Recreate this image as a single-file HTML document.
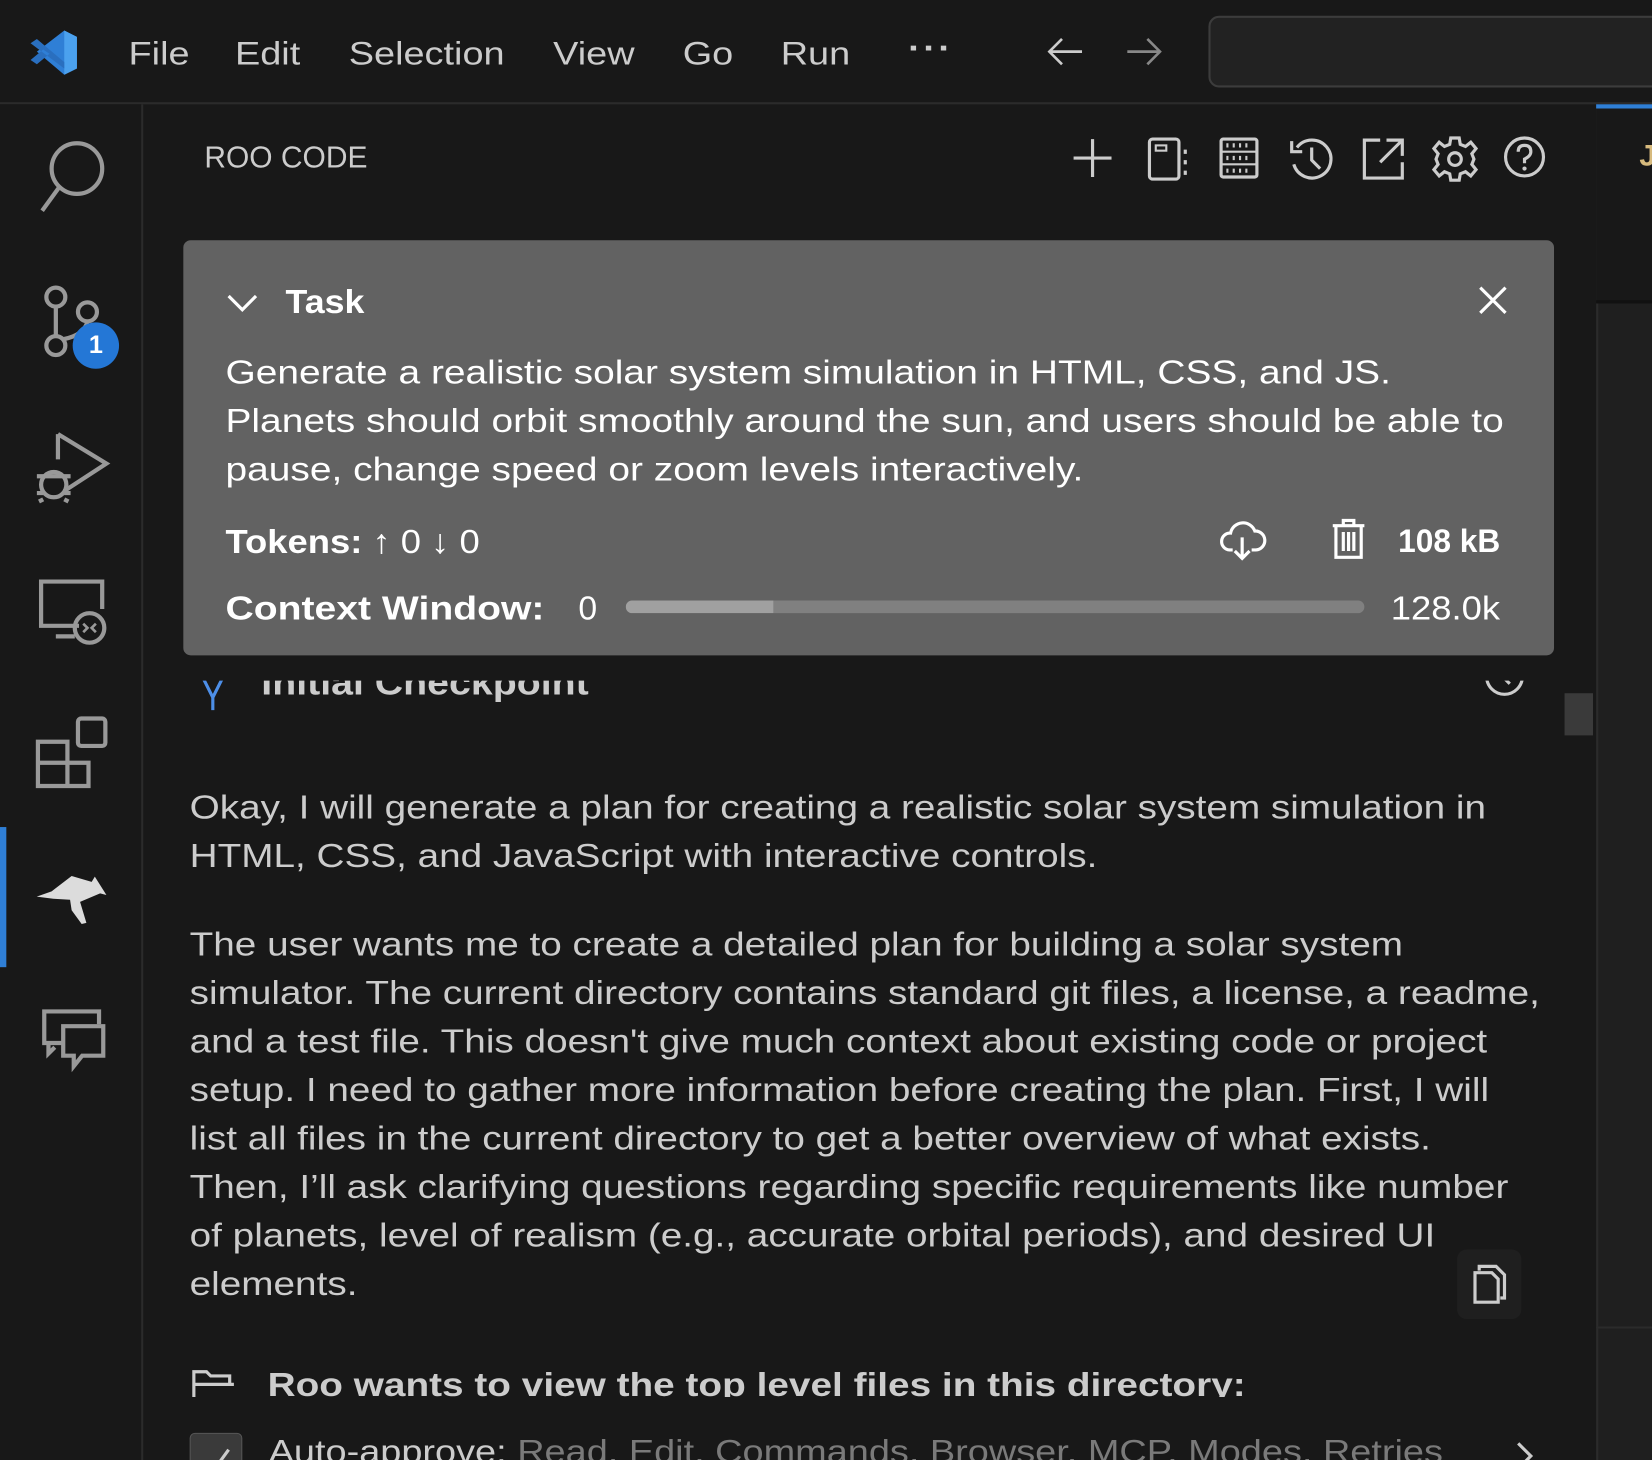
<!DOCTYPE html>
<html><head><meta charset="utf-8"><style>
html,body{margin:0;padding:0;background:#181818;overflow:hidden;width:1652px;height:1460px}
#s{position:absolute;left:0;top:0;width:1568px;height:1386px;transform:scale(1.05357);transform-origin:0 0;font-family:"Segoe UI","Liberation Sans",sans-serif;color:#ccc;background:#181818;overflow:hidden}
.a{position:absolute;white-space:nowrap;transform-origin:0 50%}
svg{position:absolute;overflow:visible}
.menu{font-size:31px;color:#ccc;top:33px;transform:scaleX(1.16)}
.b{font-weight:bold}
.p{font-size:32px;line-height:46px;color:#ccc;left:180px;transform:scaleX(1.148);transform-origin:0 0}
</style></head><body><div id="s">
<!-- title bar -->
<div class="a" style="left:0;top:0;width:1568px;height:97px;background:#181818;border-bottom:2px solid #2b2b2b"></div>
<svg style="left:27px;top:27px" width="48" height="46" viewBox="0 0 48 46"><path d="M34 2 L46 8 V38 L34 44 L8 22 L34 2Z" fill="#2f7fd6"/><path d="M34 2 V44 L46 38 V8Z" fill="#4ba1ee"/><path d="M2 14 L8 10 L34 32 V38 Z M2 30 L8 34 L20 24 L14 20Z" fill="#2a6fbf"/></svg>
<div class="a menu" style="left:122px">File</div>
<div class="a menu" style="left:223px">Edit</div>
<div class="a menu" style="left:331px">Selection</div>
<div class="a menu" style="left:525px">View</div>
<div class="a menu" style="left:648px">Go</div>
<div class="a menu" style="left:741px">Run</div>
<div class="a menu" style="left:862px;top:28px;letter-spacing:2px;font-weight:bold">···</div>
<svg style="left:993px;top:34px" width="36" height="30"><path d="M34 15 H3 M15 3 L3 15 L15 27" stroke="#ccc" stroke-width="2.5" fill="none"/></svg>
<svg style="left:1068px;top:34px" width="36" height="30"><path d="M2 15 H33 M21 3 L33 15 L21 27" stroke="#888" stroke-width="2.5" fill="none"/></svg>
<div class="a" style="left:1147px;top:15px;width:440px;height:64px;border:2px solid #3c3c3c;border-radius:10px;background:#222"></div>
<!-- activity bar -->
<div class="a" style="left:0;top:99px;width:134px;height:1290px;background:#181818;border-right:2px solid #2b2b2b"></div>
<svg style="left:36px;top:132px" width="66" height="70"><circle cx="37" cy="28" r="24" stroke="#999" stroke-width="4" fill="none"/><path d="M20 46 L4 68" stroke="#999" stroke-width="4"/></svg>
<svg style="left:40px;top:270px" width="60" height="70"><circle cx="13" cy="12" r="9" stroke="#999" stroke-width="4" fill="none"/><circle cx="13" cy="58" r="9" stroke="#999" stroke-width="4" fill="none"/><circle cx="43" cy="26" r="9" stroke="#999" stroke-width="4" fill="none"/><path d="M13 21 V49 M43 35 Q40 48 20 52" stroke="#999" stroke-width="4" fill="none"/></svg>
<div class="a" style="left:69px;top:306px;width:44px;height:44px;border-radius:50%;background:#2477d6;color:#fff;font-size:24px;font-weight:bold;text-align:center;line-height:44px">1</div>
<svg style="left:33px;top:408px" width="70" height="70"><path d="M22 4 L68 32 L28 58 M22 4 V28" stroke="#999" stroke-width="4" fill="none"/><circle cx="18" cy="52" r="12" stroke="#999" stroke-width="4" fill="none"/><path d="M2 44 H34 M2 60 H8 M28 60 H34 M8 66 L4 68 M28 66 L32 68" stroke="#999" stroke-width="4"/></svg>
<svg style="left:35px;top:548px" width="70" height="66"><path d="M40 46 H4 V4 H62 V30" stroke="#999" stroke-width="4" fill="none"/><path d="M18 56 H36" stroke="#999" stroke-width="4"/><circle cx="50" cy="48" r="14" stroke="#999" stroke-width="4" fill="none"/><path d="M44 44 L48 48 L44 52 M56 44 L52 48 L56 52" stroke="#999" stroke-width="2.5" fill="none"/></svg>
<svg style="left:34px;top:680px" width="70" height="70"><path d="M2 24 H30 V66 H2 Z M2 44 H50 V66 H30" stroke="#999" stroke-width="4" fill="none"/><rect x="40" y="2" width="26" height="26" rx="3" stroke="#999" stroke-width="4" fill="none"/></svg>
<div class="a" style="left:0;top:785px;width:6px;height:133px;background:#2f7fd6"></div>
<svg style="left:0;top:0" width="110" height="900"><path d="M34.8 851 L49 846 L68 831.5 L87 837 L90 832 L101 849.5 L95 848 L76 856 L82 876 L77.5 877 L68 864 L66.5 854 L50.5 853 Z" fill="#dcdcdc"/></svg>
<svg style="left:38px;top:956px" width="64" height="64"><path d="M22 34 H4 V4 H56 V16" stroke="#999" stroke-width="4" fill="none"/><path d="M22 18 H60 V46 H40 L32 56 V46 H22 Z" stroke="#999" stroke-width="4" fill="none"/><path d="M8 34 V44 L14 38" stroke="#999" stroke-width="4" fill="none"/></svg>
<!-- sidebar header -->
<div class="a" style="left:194px;top:134px;font-size:29px;color:#ccc;transform:scaleX(0.98)">ROO CODE</div>
<svg style="left:1018px;top:130px" width="40" height="40"><path d="M19 2 V38 M1 20 H37" stroke="#ccc" stroke-width="3"/></svg>
<svg style="left:1088px;top:130px" width="42" height="42"><rect x="3" y="2" width="28" height="38" rx="3" stroke="#ccc" stroke-width="3" fill="none"/><rect x="9" y="8" width="10" height="5" stroke="#ccc" stroke-width="2" fill="none"/><path d="M37 12 V16 M37 22 V26 M37 32 V36" stroke="#ccc" stroke-width="3"/></svg>
<svg style="left:1157px;top:130px" width="40" height="40"><rect x="2" y="2" width="34" height="36" rx="2" stroke="#ccc" stroke-width="3" fill="none"/><path d="M2 14 H36 M2 26 H36 M8 6 V10 M14 6 V10 M20 6 V10 M26 6 V10 M8 18 V22 M14 18 V22 M20 18 V22 M26 18 V22 M8 30 V34 M14 30 V34 M20 30 V34 M26 30 V34" stroke="#ccc" stroke-width="2"/></svg>
<svg style="left:1223px;top:130px" width="44" height="42"><path d="M8 10 A18 18 0 1 1 5 26" stroke="#ccc" stroke-width="3" fill="none"/><path d="M3 4 V14 H13" stroke="#ccc" stroke-width="3" fill="none"/><path d="M22 10 V22 L30 30" stroke="#ccc" stroke-width="3" fill="none"/></svg>
<svg style="left:1292px;top:130px" width="42" height="42"><path d="M18 3 H3 V39 H39 V24" stroke="#ccc" stroke-width="3" fill="none"/><path d="M24 3 H39 V18 M39 3 L18 24" stroke="#ccc" stroke-width="3" fill="none"/></svg>
<svg style="left:1358px;top:128px" width="46" height="46" viewBox="-23 -23 46 46"><g stroke="#ccc" stroke-width="3" fill="none"><circle r="6"/><path d="M-4 -20 H4 L5 -14 L10 -12 L15 -16 L20 -10 L16 -5 L18 0 L16 5 L20 10 L15 16 L10 12 L5 14 L4 20 H-4 L-5 14 L-10 12 L-15 16 L-20 10 L-16 5 L-18 0 L-16 -5 L-20 -10 L-15 -16 L-10 -12 L-5 -14 Z"/></g></svg>
<svg style="left:1427px;top:129px" width="42" height="42"><circle cx="20" cy="20" r="18" stroke="#ccc" stroke-width="3" fill="none"/><path d="M14 15 Q14 9 20 9 Q26 9 26 15 Q26 19 20 22 V26" stroke="#ccc" stroke-width="3" fill="none"/><circle cx="20" cy="31" r="2" fill="#ccc"/></svg>
<!-- right pane -->
<div class="a" style="left:1515px;top:99px;width:60px;height:1300px;background:#1f1f1f;border-left:2px solid #2b2b2b"></div>
<div class="a" style="left:1515px;top:99px;width:60px;height:4px;background:#2f7fd6"></div>
<div class="a" style="left:1515px;top:103px;width:60px;height:182px;background:#181818;border-bottom:3px solid #111"></div>
<div class="a" style="left:1556px;top:132px;font-size:28px;color:#d7ba7d;font-weight:bold">J</div>
<div class="a" style="left:1515px;top:1259px;width:60px;height:2px;background:#2b2b2b"></div>
<!-- scrollbar -->
<div class="a" style="left:1485px;top:658px;width:27px;height:40px;background:#3a3a3a"></div>
<!-- checkpoint clipped -->
<div class="a" style="left:140px;top:646px;width:1340px;height:40px;overflow:hidden">
 <div class="a b" style="left:108px;top:-17px;font-size:33px;color:#ccc;transform:scaleX(1.13)">Initial Checkpoint</div>
 <svg style="left:50px;top:-6px" width="24" height="40"><path d="M2 2 Q12 22 12 22 Q12 22 22 2 M12 22 V34" stroke="#4d8fe8" stroke-width="3" fill="none"/></svg>
 <svg style="left:1268px;top:-24px" width="40" height="50"><circle cx="20" cy="20" r="17" stroke="#ccc" stroke-width="3" fill="none"/><path d="M20 12 V22 L25 27" stroke="#ccc" stroke-width="3" fill="none"/></svg>
</div>
<!-- task box -->
<div class="a" style="left:174px;top:228px;width:1301px;height:394px;background:#626262;border-radius:7px"></div>
<svg style="left:215px;top:278px" width="32" height="20"><path d="M2 3 L15 16 L28 3" stroke="#fff" stroke-width="3" fill="none"/></svg>
<div class="a b" style="left:271px;top:268px;font-size:32px;color:#fff;transform:scaleX(1.06)">Task</div>
<svg style="left:1403px;top:271px" width="28" height="28"><path d="M2 2 L26 26 M26 2 L2 26" stroke="#fff" stroke-width="3"/></svg>
<div class="a" style="left:214px;top:330px;font-size:32px;line-height:46px;color:#fff;transform:scaleX(1.154);transform-origin:0 0">Generate a realistic solar system simulation in HTML, CSS, and JS.<br>Planets should orbit smoothly around the sun, and users should be able to<br>pause, change speed or zoom levels interactively.</div>
<div class="a" style="left:214px;top:496px;font-size:32px;color:#fff;transform:scaleX(1.08)"><span class="b">Tokens:</span> ↑ 0 ↓ 0</div>
<svg style="left:1158px;top:494px" width="44" height="40"><path d="M12 28 H9 A8 8 0 0 1 10 12 A12 12 0 0 1 33 10 A9 9 0 0 1 34 28 H30" stroke="#fff" stroke-width="3" fill="none"/><path d="M21 16 V36 M14 29 L21 36 L28 29" stroke="#fff" stroke-width="3" fill="none"/></svg>
<svg style="left:1263px;top:492px" width="34" height="40"><path d="M2 7 H32 M12 7 V2 H22 V7 M5 7 V37 H29 V7 M12 13 V31 M17 13 V31 M22 13 V31" stroke="#fff" stroke-width="3" fill="none"/></svg>
<div class="a b" style="left:1327px;top:496px;font-size:31px;color:#fff;transform:scaleX(0.97)">108 kB</div>
<div class="a b" style="left:214px;top:559px;font-size:32px;color:#fff;transform:scaleX(1.16)">Context Window:</div>
<div class="a" style="left:549px;top:559px;font-size:32px;color:#fff">0</div>
<div class="a" style="left:594px;top:570px;width:701px;height:12px;border-radius:6px;background:#808080;overflow:hidden"><div style="width:140px;height:12px;background:#a0a0a0"></div></div>
<div class="a" style="left:1320px;top:559px;font-size:32px;color:#fff;transform:scaleX(1.08)">128.0k</div>
<!-- body text -->
<div class="a p" style="top:743px">Okay, I will generate a plan for creating a realistic solar system simulation in<br>HTML, CSS, and JavaScript with interactive controls.</div>
<div class="a p" style="top:873px">The user wants me to create a detailed plan for building a solar system<br>simulator. The current directory contains standard git files, a license, a readme,<br>and a test file. This doesn't give much context about existing code or project<br>setup. I need to gather more information before creating the plan. First, I will<br>list all files in the current directory to get a better overview of what exists.<br>Then, I’ll ask clarifying questions regarding specific requirements like number<br>of planets, level of realism (e.g., accurate orbital periods), and desired UI<br>elements.</div>
<div class="a" style="left:1383px;top:1186px;width:61px;height:66px;background:#1f1f1f;border-radius:9px"></div>
<svg style="left:1396px;top:1198px" width="36" height="42"><path d="M8 8 V4 H24 L32 12 V34 H28" stroke="#ccc" stroke-width="3" fill="none"/><path d="M4 10 H20 L26 16 V38 H4 Z" stroke="#ccc" stroke-width="3" fill="none"/></svg>
<!-- bottom clipped -->
<div class="a" style="left:170px;top:1290px;width:1300px;height:36px;overflow:hidden">
 <svg style="left:12px;top:10px" width="44" height="34"><path d="M2 32 V2 H14 L18 6 H36 V14 M2 14 H40" stroke="#ccc" stroke-width="3" fill="none"/></svg>
 <div class="a b" style="left:84px;top:6px;font-size:32px;color:#ccc;transform:scaleX(1.15)">Roo wants to view the top level files in this directory:</div>
</div>
<div class="a" style="left:180px;top:1360px;width:48px;height:48px;border-radius:5px;background:#3a3a3a;border:1px solid #555"></div>
<svg style="left:190px;top:1370px" width="30" height="30"><path d="M3 20 L11 28 L27 6" stroke="#ccc" stroke-width="3" fill="none"/></svg>
<div class="a" style="left:255px;top:1360px;font-size:31px;color:#ccc;transform:scaleX(1.16)">Auto-approve: <span style="color:#7a7a7a">Read, Edit, Commands, Browser, MCP, Modes, Retries</span></div>
<svg style="left:1438px;top:1368px" width="20" height="30"><path d="M3 2 L15 14 L3 26" stroke="#ccc" stroke-width="3" fill="none"/></svg>
</div></body></html>
